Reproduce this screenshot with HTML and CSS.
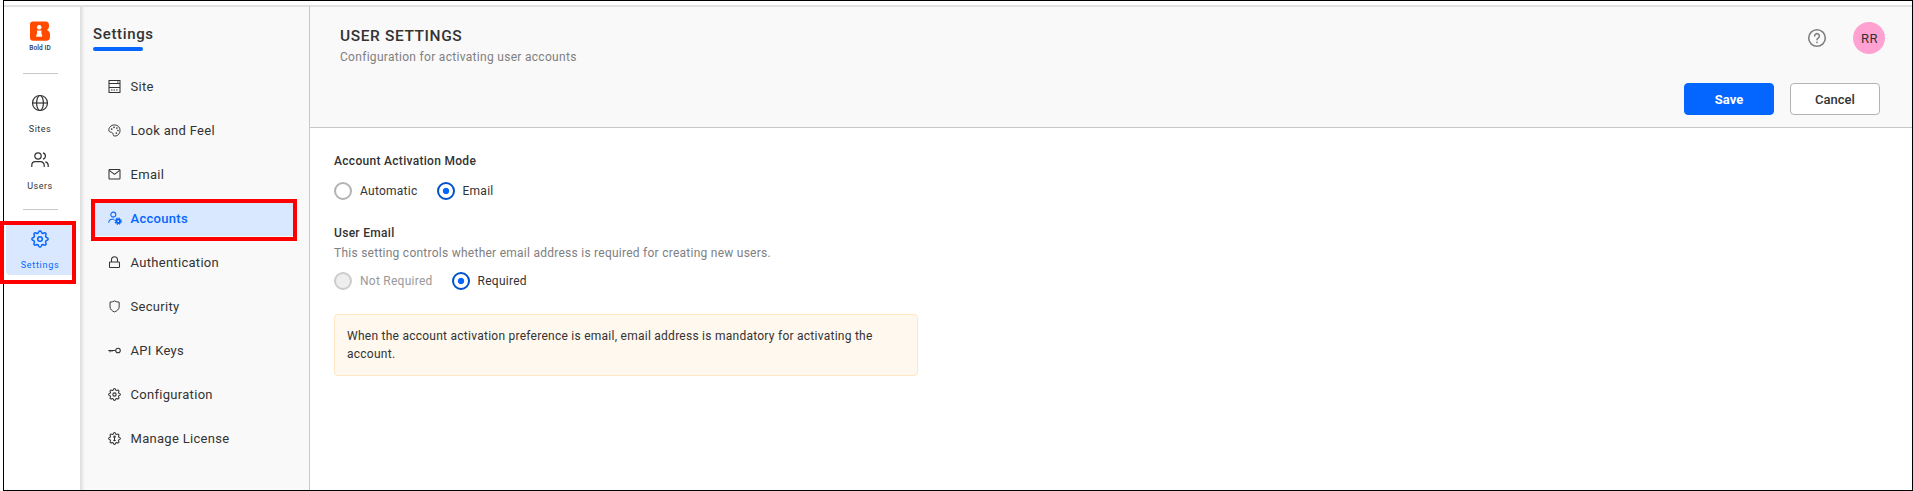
FILE: index.html
```html
<!DOCTYPE html>
<html lang="en">
<head>
<meta charset="utf-8">
<title>User Settings</title>
<link rel="stylesheet" href="styles.css">
</head>
<body>
<div class="app">
  <nav class="rail">
    <div class="logo">
      <svg width="20" height="20" viewBox="0 0 20 20"><path fill="#ff4a00" d="M3 .5h12.500a3.500 3.500 0 0 1 3.500 3.500v1.500q0 2.500-2.200 3.600Q20 10.500 20 13.500v2.500a3.700 3.700 0 0 1-3.700 3.700H3a3 3 0 0 1-3-3v-13.200a3 3 0 0 1 3-3z"/><circle cx="9.200" cy="6.300" r="2.300" fill="#fff"/><path fill="#fff" d="M7 9.600h4.400v3.200l.7 1v1.900H6.300v-1.900l.7-1z"/></svg>
      <span class="logo-text">Bold ID</span>
    </div>
    <div class="rule"></div>
    <a class="rail-item sites">
      <svg class="line" width="18" height="18" viewBox="0 0 18 18"><circle cx="9" cy="9" r="7.500"/><ellipse cx="9" cy="9" rx="3.400" ry="7.500"/><path d="M1.500 9h15"/></svg>
      <span>Sites</span>
    </a>
    <a class="rail-item users">
      <svg class="line" width="18" height="18" viewBox="0 0 18 18"><circle cx="7" cy="5" r="3.200"/><path d="M.8 16v-1.800a3.500 3.500 0 0 1 3.500-3.500h5.400a3.500 3.500 0 0 1 3.500 3.500V16M12 1.900a3.200 3.200 0 0 1 0 6.200M14.300 10.900a3.500 3.500 0 0 1 2.900 3.400V16"/></svg>
      <span>Users</span>
    </a>
    <div class="rule"></div>
    <a class="rail-item settings active">
      <svg class="line gear" width="18" height="18" viewBox="0 0 18 18"><use href="#gear"/><circle cx="9" cy="9" r="2.300"/></svg>
      <span>Settings</span>
    </a>
  </nav>

  <aside class="side">
    <h2 class="side-title">Settings</h2>
    <ul class="menu">
      <li><svg class="line" width="13" height="13" viewBox="0 0 13 13"><path d="M1 .5h11v12H1zM1 3.500h11M1 7.500h11M9 2h1.500"/><path d="M3 10h7" stroke-dasharray="1.500 1"/></svg><span>Site</span></li>
      <li><svg class="line" width="13" height="13" viewBox="0 0 14 14"><path d="M4.200 9.200C3.500 8.500 1.500 9 1 7.500.3 4 3.200 1 7 1s6 2.600 6 6-2.500 6-5.500 6c-2.200 0-1.700-1.300-1.900-2.300-.1-.7-.8-1-1.400-1.500z"/><g fill="currentColor" stroke="none"><circle cx="4" cy="5.500" r=".9"/><circle cx="6.500" cy="3.600" r=".9"/><circle cx="9.500" cy="4.300" r=".9"/><circle cx="10.700" cy="7" r=".9"/><circle cx="9" cy="9.700" r=".9"/></g></svg><span>Look and Feel</span></li>
      <li><svg class="line" width="13" height="13" viewBox="0 0 13 13"><rect x="1" y="1.500" width="11" height="9.500" rx=".8"/><path d="M1.300 2.300 6.500 6.300l5.200-4"/></svg><span>Email</span></li>
      <li class="current"><svg class="line" width="14" height="14" viewBox="0 0 14 14"><circle cx="5.300" cy="3.600" r="2.500"/><path d="M.8 11.800v-.6a3 3 0 0 1 3-3h2.400"/><circle cx="10.200" cy="10.200" r="1.800" stroke-width="1.900"/><circle cx="10.200" cy="10.200" r="3.100" stroke-dasharray="1.400 1.030" stroke-width="1.200"/></svg><span>Accounts</span></li>
      <li><svg class="line" width="13" height="13" viewBox="0 0 13 13"><rect x="1.500" y="6" width="10" height="5.500" rx=".8"/><path d="M3.500 6V3.800a3 3 0 0 1 6 0V6"/></svg><span>Authentication</span></li>
      <li><svg class="line" width="13" height="13" viewBox="0 0 14 14"><path d="M7 1Q9.500 2.300 12 2.300V7.500C12 10 9.500 12 7 12.800 4.500 12 2.200 10 2.200 7.500V2.300Q4.500 2.300 7 1z"/></svg><span>Security</span></li>
      <li><svg class="line" width="13" height="13" viewBox="0 0 13 13"><circle cx="10" cy="6.500" r="2.300"/><path d="M7.700 6.500H.3M2 6.500v1.800M4 6.500v1.200"/></svg><span>API Keys</span></li>
      <li><svg class="line gear" width="13" height="13" viewBox="0 0 18 18"><use href="#gear"/><circle cx="9" cy="9" r="2.300"/></svg><span>Configuration</span></li>
      <li><svg class="line gear" width="13" height="13" viewBox="0 0 18 18"><use href="#gear"/><circle cx="9" cy="6.500" r="1"/><path d="M9 8.300v4.500M7.300 11.800h3.400"/></svg><span>Manage License</span></li>
    </ul>
  </aside>

  <main class="main">
    <header class="head">
      <div class="head-top">
        <div>
          <h1 class="title">USER SETTINGS</h1>
          <p class="subtitle">Configuration for activating user accounts</p>
        </div>
        <div class="account">
          <svg class="help" width="20" height="20" viewBox="0 0 20 20"><circle cx="10" cy="10" r="8.300"/><path d="M7.600 8a2.400 2.400 0 1 1 3.600 2.100c-.8.500-1.200.9-1.200 1.700"/><circle class="dot" cx="10" cy="14.300" r=".9"/></svg>
          <span class="avatar">RR</span>
        </div>
      </div>
      <div class="actions">
        <button class="btn primary">Save</button>
        <button class="btn">Cancel</button>
      </div>
    </header>
    <section class="body">
      <h3 class="label">Account Activation Mode</h3>
      <div class="radios">
        <label class="radio"><i></i><span>Automatic</span></label>
        <label class="radio on"><i></i><span>Email</span></label>
      </div>
      <h3 class="label second">User Email</h3>
      <p class="desc">This setting controls whether email address is required for creating new users.</p>
      <div class="radios tight">
        <label class="radio off"><i></i><span>Not Required</span></label>
        <label class="radio on"><i></i><span>Required</span></label>
      </div>
      <div class="notice">When the account activation preference is email, email address is mandatory for activating the account.</div>
    </section>
  </main>
</div>
<div class="mark mark-rail"></div>
<div class="mark mark-menu"></div>
<svg width="0" height="0" class="defs"><defs><path id="gear" stroke-linejoin="round" d="M7.280 2.940Q7.750 .790 9 .790Q10.250 .790 10.720 2.940L12.070 3.500Q13.920 2.310 14.800 3.200Q15.690 4.080 14.500 5.930L15.060 7.280Q17.210 7.750 17.210 9Q17.210 10.250 15.060 10.720L14.500 12.070Q15.690 13.920 14.800 14.800Q13.920 15.690 12.070 14.500L10.720 15.060Q10.250 17.210 9 17.210Q7.750 17.210 7.280 15.060L5.930 14.500Q4.080 15.690 3.200 14.800Q2.310 13.920 3.500 12.070L2.940 10.720Q.790 10.250 .790 9Q.790 7.750 2.940 7.280L3.500 5.930Q2.310 4.080 3.200 3.200Q4.080 2.310 5.930 3.500Z"/></defs></svg>
</body>
</html>
```
FILE: styles.css
```css
* { box-sizing: border-box; margin: 0; padding: 0; }
body { width: 1913px; height: 491px; overflow: hidden; background: #fff; color: #333; font-family: Roboto, "Liberation Sans", sans-serif; font-size: 12px; letter-spacing: .255px; }
.defs { position: absolute; top: 0; left: 0; }
.app { display: flex; height: 491px; margin-left: 3px; padding-top: 4px; border: 1px solid #000; }
.line { fill: none; stroke: currentColor; stroke-width: 1.05; stroke-linejoin: round; flex: none; }
.gear { stroke-width: 1.5; }

.rail { width: 76px; flex: none; border-top: 2px solid #e2e2e2; display: flex; flex-direction: column; align-items: center; padding: 14px 4px 0 0; }
.rail .line { stroke-width: 1.2; }
.rail .gear { stroke-width: 1.5; }
.logo { display: flex; flex-direction: column; align-items: center; height: 52px; }
.logo-text { font-size: 6.500px; font-weight: 500; letter-spacing: .1px; color: #25355c; line-height: 10px; margin-top: 2px; }
.rule { width: 35px; height: 1px; background: #c8c8c8; flex: none; }
.rail-item { display: flex; flex-direction: column; align-items: center; font-size: 9px; letter-spacing: .5px; line-height: 12px; width: 69px; }
.rail-item span { margin-top: 11px; }
.sites { margin-top: 20px; height: 57px; }
.users { height: 58px; }
.settings { height: 52px; margin-top: 13px; padding-top: 7px; background: #dae8ff; color: #0565ff; border-radius: 4px; letter-spacing: .7px; }

.side { width: 230px; flex: none; border-top: 2px solid #e2e2e2; border-right: 1px solid #c8c8c8; background: linear-gradient(90deg, #e2e2e2 1.500px, #f0f0f0 3px, #f9f9f9 5px); padding: 17px 16px 0 13px; }
.side-title { font-size: 15px; font-weight: 500; line-height: 20px; letter-spacing: .65px; }
.side-title::after { content: ""; display: block; width: 50px; height: 4px; border-radius: 2px; background: #0565ff; margin-top: 3px; }
.menu { list-style: none; margin-top: 17px; }
.menu li { height: 36px; margin-bottom: 8px; padding-left: 15px; display: flex; align-items: center; font-size: 13px; letter-spacing: .3px; }
.menu .line { margin-right: 9.500px; }
.menu .current { background: #dae8ff; color: #0565ff; font-weight: 500; }
.menu .current .line { margin-right: 8.500px; }

.main { flex: 1; min-width: 0; }
.head { height: 123px; border-top: 2px solid #e2e2e2; border-bottom: 1px solid #c8c8c8; background: #f9f9f9; padding: 15px 32px 0 30px; }
.head-top { display: flex; justify-content: space-between; height: 61px; margin-right: -5px; }
.title { font-size: 15.500px; font-weight: 500; line-height: 20px; letter-spacing: .6px; margin-top: 4px; }
.subtitle { color: #808080; line-height: 18px; margin-top: 2px; letter-spacing: .3px; }
.account { display: flex; gap: 26px; height: 32px; align-items: center; }
.help { fill: none; stroke: #808080; stroke-width: 1.600; stroke-linecap: round; }
.dot { fill: #808080; stroke: none; }
.avatar { width: 32px; height: 32px; border-radius: 50%; background: #ffa1d1; display: grid; place-items: center; font-size: 13px; letter-spacing: .5px; padding-left: 1px; }
.actions { display: flex; justify-content: flex-end; gap: 16px; }
.btn { width: 90px; height: 32px; border: 1px solid #b3b3b3; border-radius: 4px; background: #fff; color: #333; font: 500 13px Roboto, sans-serif; letter-spacing: 0; }
.primary { background: #0565ff; border-color: #0565ff; color: #fff; font-weight: 700; }

.body { padding: 24px; }
.label { font-size: 12px; font-weight: 500; line-height: 18px; letter-spacing: .3px; }
.radios { display: flex; gap: 19px; margin-top: 12px; }
.radio { display: flex; align-items: center; gap: 8px; height: 18px; }
.radio i { width: 18px; height: 18px; border-radius: 50%; border: 2px solid #b3b3b3; background: #fff; }
.on i { border-color: #0052cc; background: radial-gradient(circle, #0565ff 2.800px, #fff 3.600px); }
.off { color: #999; }
.off i { border-color: #ccc; background: #eee; }
.second { margin-top: 24px; }
.desc { color: #808080; line-height: 18px; margin-top: 2px; }
.tight { margin-top: 10px; }
.notice { width: 584px; height: 62px; margin-top: 24px; padding: 12px; border: 1px solid #ffe7c2; border-radius: 4px; background: #fff8ee; line-height: 18px; }

.mark { position: absolute; border: 4px solid #f00; }
.mark-rail { left: 0; top: 221px; width: 76px; height: 63px; }
.mark-menu { left: 91px; top: 199px; width: 206px; height: 42px; }
```
